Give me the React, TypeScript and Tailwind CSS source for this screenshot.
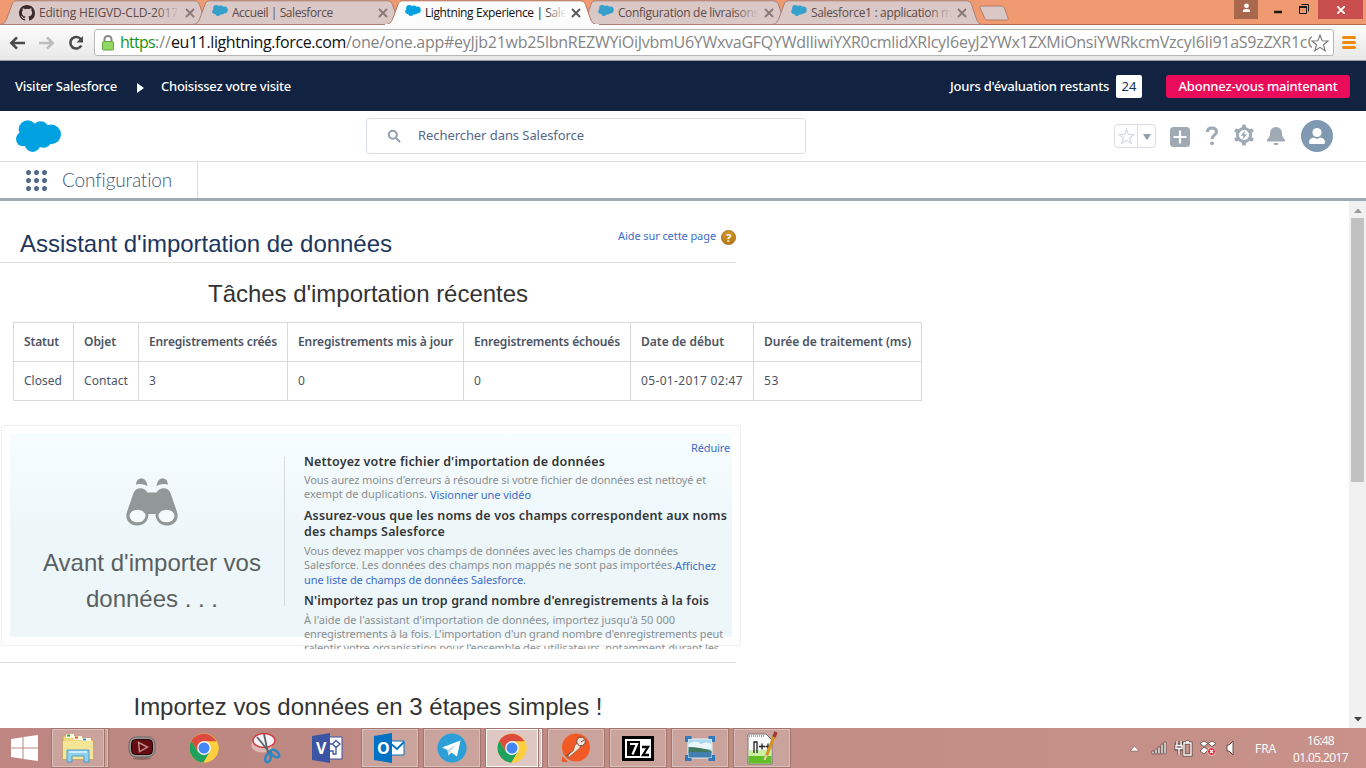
import { useLayoutEffect, useRef, useState } from "react";
import type { ReactNode } from "react";

type FitProps = { w: number; className?: string; children: string };

/* Single line of text tracked so that it fills a given width. */
function Fit({ w, className = "", children }: FitProps) {
  const ref = useRef<HTMLSpanElement>(null);
  const [spacing, setSpacing] = useState(0);
  useLayoutEffect(() => {
    if (!ref.current) return;
    const natural = ref.current.getBoundingClientRect().width;
    setSpacing((w - natural) / children.length);
  }, [w, children]);
  return (
    <span ref={ref} className={`inline-block shrink-0 whitespace-nowrap ${className}`} style={{ letterSpacing: `${spacing}px` }}>
      {children}
    </span>
  );
}

function Cloud({ className, fill = "#00a1e0" }: { className: string; fill?: string }) {
  return (
    <svg viewBox="0 0 45 32" className={className} fill={fill}>
      <circle cx="11.7" cy="9.3" r="9" />
      <circle cx="24.6" cy="9.3" r="8.1" />
      <circle cx="35.2" cy="14.4" r="9.8" />
      <circle cx="27.5" cy="19.8" r="7.9" />
      <circle cx="16.6" cy="24" r="7.9" />
      <circle cx="7.3" cy="19" r="7.3" />
      <path d="M8 9h26v12H8z" />
    </svg>
  );
}

function GitHub() {
  return (
    <svg viewBox="0 0 16 16" className="h-4 w-4" fill="#3b2b2b">
      <path d="M8 0C3.58 0 0 3.58 0 8c0 3.54 2.29 6.53 5.47 7.59.4.07.55-.17.55-.38 0-.19-.01-.82-.01-1.49-2.01.37-2.53-.49-2.69-.94-.09-.23-.48-.94-.82-1.13-.28-.15-.68-.52-.01-.53.63-.01 1.08.58 1.23.82.72 1.21 1.87.87 2.33.66.07-.52.28-.87.51-1.07-1.78-.2-3.64-.89-3.64-3.95 0-.87.31-1.59.82-2.15-.08-.2-.36-1.02.08-2.12 0 0 .67-.21 2.2.82a7.6 7.6 0 0 1 4 0c1.53-1.04 2.2-.82 2.2-.82.44 1.1.16 1.92.08 2.12.51.56.82 1.27.82 2.15 0 3.07-1.87 3.75-3.65 3.95.29.25.54.73.54 1.48 0 1.07-.01 1.93-.01 2.2 0 .21.15.46.55.38A8 8 0 0 0 16 8c0-4.42-3.58-8-8-8z" />
    </svg>
  );
}

function Tab({ title, w, active, github, fade = true }: { title: string; w: number; active?: boolean; github?: boolean; fade?: boolean }) {
  return (
    <div className={`relative flex h-[25px] w-[193px] shrink-0 items-start ${active ? "z-10" : ""}`}>
      <svg viewBox="0 0 214 25" className="absolute top-0 -left-[2px] h-[25px] w-[214px]">
        <path
          d="M0 24.5C5 24.5 6.500 22 8 18L13 4.500C14 1.500 15.500 .8 18 .8H195C198 .8 199.500 2 200.500 4.500L205.500 19C207 23 208.500 24.500 213 24.500Z"
          fill={active ? "#fcfcfc" : "#d9c8c6"}
          stroke={active ? "#b2765f" : "#a97f74"}
          strokeWidth="1"
        />
        {active && <path d="M0 25h214" stroke="#fcfcfc" strokeWidth="2" />}
      </svg>
      <div className="relative flex h-[25px] w-full items-start pl-[18px]">
        <div className="mt-[5px] w-[20px]">{github ? <GitHub /> : <Cloud className="h-[11px] w-[16px]" fill={active ? "#00a1e0" : "#35a0cc"} />}</div>
        <div className="relative flex h-[25px] w-[142px] items-start overflow-hidden pt-[4px]">
          <Fit w={w} className={`text-[12px] leading-[18px] ${active ? "text-[#111]" : "text-[#5d4b49]"}`}>{title}</Fit>
          {fade && <div className={`absolute top-[2px] right-0 h-[20px] w-[24px] bg-linear-to-r ${active ? "from-[#fcfcfc00] to-[#fcfcfc]" : "from-[#d9c8c600] to-[#d9c8c6]"}`} />}
        </div>
        <svg viewBox="0 0 8 8" className="mt-[9px] ml-[6px] h-2 w-2 overflow-visible" stroke={active ? "#555" : "#8a7775"} strokeWidth="1.8">
          <path d="M0 0 8 8M8 0 0 8" />
        </svg>
      </div>
    </div>
  );
}

function Browser() {
  return (
    <div className="h-[61px] border-b border-[#9c9c9c] bg-[#f09a71] font-['Open_Sans',sans-serif]">
      <div className="relative flex h-[25px] border-b border-[#b06d52] pl-px">
        <Tab title="Editing HEIGVD-CLD-2017" w={139} github />
        <Tab title="Accueil | Salesforce" w={101} fade={false} />
        <Tab title="Lightning Experience | Sale" w={142} active />
        <Tab title="Configuration de livraisons" w={141} />
        <Tab title="Salesforce1 : application m" w={141} />
        <svg viewBox="0 0 30 16" className="mt-[5px] ml-[13px] h-4 w-[30px]">
          <path d="M2 1H22C24 1 25 2 25.500 3.500L29 13C29.500 14.500 29 15 27.500 15H9C7 15 6 14 5.500 12.500L1 3C.5 1.500 1 1 2 1Z" fill="#d9c8c6" stroke="#b07d6c" />
        </svg>
        <div className="absolute top-0 right-0 flex h-[19px] pr-[3px]">
          <div className="flex w-[24px] justify-center bg-[#a9684c]">
            <svg viewBox="0 0 10 10" className="mt-[3px] h-[10px] w-[9px]" fill="#fff"><circle cx="5" cy="2.600" r="2.600" /><path d="M1 9.500V8Q1 6 5 6T9 8V9.500Z" /></svg>
          </div>
          <svg viewBox="0 0 60 19" className="h-[19px] w-[60px]" fill="none" stroke="#1d1715">
            <path d="M16 12h8" strokeWidth="2.500" /><path d="M41.500 6.500h7v7h-7z" /><path d="M41 7h8" strokeWidth="2" /><path d="M43.500 4.500h7v7" />
          </svg>
          <div className="flex w-[45px] justify-center bg-[#c94f4f]">
            <svg viewBox="0 0 8 8" className="mt-[6px] h-2 w-2" stroke="#fff" strokeWidth="1.8"><path d="M0 0 8 8M8 0 0 8" /></svg>
          </div>
        </div>
      </div>
      <div className="flex h-[35px] items-center bg-linear-to-b from-[#fcfcfc] to-[#e8e8e8] pl-[9px]">
        <svg viewBox="0 0 80 20" className="h-5 w-20" fill="none" stroke="#4b4b4b" strokeWidth="2.600">
          <path d="M2 10h14M8 4.300 2.300 10 8 15.700" />
          <path d="M44 10H30M38 4.300 43.700 10 38 15.700" stroke="#bdbdbd" />
          <path d="M72 6.500A5.800 5.800 0 1 0 72.300 12.500" /><path d="M74 3v6.500h-6.500z" fill="#4b4b4b" stroke="none" />
        </svg>
        <div className="ml-[5px] flex h-[27px] w-[1240px] items-center rounded-[3px] border border-[#b6b6b6] bg-white pl-[7px]">
          <svg viewBox="0 0 12 16" className="mr-[6px] h-4 w-3">
            <path d="M2.500 7V4.500Q2.500 1 6 1T9.500 4.500V7" fill="none" stroke="#8a8a8a" strokeWidth="2" /><rect x=".5" y="6.500" width="11" height="8.500" rx="1" fill="#91d863" stroke="#61a33d" />
          </svg>
          <div className="mb-[2px] flex w-[1192px] overflow-hidden text-[16px] leading-[22px] text-[#858585]">
            <Fit w={35} className="text-[#159415]">https</Fit>
            <Fit w={16}>://</Fit>
            <Fit w={175} className="text-[#111]">eu11.lightning.force.com</Fit>
            <Fit w={971}>/one/one.app#eyJjb21wb25lbnREZWYiOiJvbmU6YWxvaGFQYWdlIiwiYXR0cmlidXRlcyI6eyJ2YWx1ZXMiOnsiYWRkcmVzcyI6Ii91aS9zZXR1cC</Fit>
          </div>
          <svg viewBox="0 0 18 18" className="-ml-px h-[18px] w-[18px] shrink-0" fill="#fff" stroke="#777" strokeWidth="1.100"><path d="M9 1l2.200 5.700 6 .3-4.700 3.800 1.700 6L9 13.400 3.800 16.800l1.700-6L.8 7l6-.3z" /></svg>
        </div>
        <div className="ml-2 flex flex-col gap-[2px]">
          <div className="h-[3px] w-[14px] rounded-full bg-[#ee8a0c]" /><div className="h-[3px] w-[14px] rounded-full bg-[#ee8a0c]" /><div className="h-[3px] w-[14px] rounded-full bg-[#ee8a0c]" />
        </div>
      </div>
    </div>
  );
}

function TrialBar() {
  return (
    <div className="flex h-[50px] items-center bg-[#112340] pr-4 pl-[15px] text-[13px] font-medium text-white">
      <Fit w={102} className="mt-[2px]">Visiter Salesforce</Fit>
      <svg viewBox="0 0 7 10" className="mt-[3px] mr-[17px] ml-[20px] h-[10px] w-[7px]" fill="#fff"><path d="M0 0 7 5 0 10z" /></svg>
      <Fit w={130} className="mt-[2px]">Choisissez votre visite</Fit>
      <div className="ml-auto flex items-center">
        <Fit w={159} className="mt-[2px]">Jours d'évaluation restants</Fit>
        <div className="ml-[7px] flex h-[23px] w-[26px] items-center justify-center rounded-[2px] bg-white pt-px font-normal text-[#16325c]"><Fit w={15}>24</Fit></div>
        <div className="ml-[24px] flex h-[23px] w-[184px] items-center justify-center rounded-[3px] bg-[#ea0b5b] pt-px"><Fit w={159}>Abonnez-vous maintenant</Fit></div>
      </div>
    </div>
  );
}

function Header() {
  return (
    <header className="flex h-[51px] items-start border-b border-[#d8dde6] bg-white pl-[16px]">
      <Cloud className="mt-[9px] h-8 w-[45px]" />
      <div className="mt-[7px] ml-[305px] flex h-[36px] w-[440px] items-center rounded-[4px] border border-[#d8dde6] pl-[20px]">
        <svg viewBox="0 0 14 14" className="mr-[17px] h-[14px] w-[14px]" fill="none" stroke="#919eab" strokeWidth="2"><circle cx="5.800" cy="5.800" r="4" /><path d="m9 9 4 4" /></svg>
        <Fit w={166} className="text-[13px] text-[#54698d]">Rechercher dans Salesforce</Fit>
      </div>
      <div className="mt-[13px] ml-[308px] flex h-6 w-[42px] rounded-[4px] border border-[#d8dde6]">
        <div className="flex w-[23px] items-center justify-center border-r border-[#d8dde6]">
          <svg viewBox="0 0 18 18" className="h-[17px] w-[17px]" fill="none" stroke="#d5dae4" strokeWidth="1.300"><path d="M9 1.500l2 5.300 5.800.2-4.500 3.600 1.600 5.700L9 13l-4.900 3.300 1.600-5.700L1.200 7 7 6.800z" /></svg>
        </div>
        <div className="flex flex-1 items-center justify-center"><svg viewBox="0 0 8 6" className="mt-px h-[6px] w-2" fill="#919eab"><path d="M0 0h8L4.600 5.500h-1.200z" /></svg></div>
      </div>
      <svg viewBox="0 0 20 20" className="mt-[16px] ml-[14px] h-5 w-5"><rect width="20" height="20" rx="3.500" fill="#9faab5" /><path d="M10 3.500v13M3.500 10h13" stroke="#fff" strokeWidth="2.200" /></svg>
      <svg viewBox="0 0 14 20" className="mt-[15px] ml-[15px] h-5 w-[14px]" fill="none" stroke="#9faab5" strokeWidth="3"><path d="M2.300 6Q2.500 2 7 2T11.500 6C11.500 9 7 9 7 13" /><circle cx="7" cy="17.300" r="1.900" fill="#9faab5" stroke="none" /></svg>
      <svg viewBox="0 0 22 22" className="mt-[13px] ml-[14px] h-[22px] w-[22px]">
        <g fill="#9faab5"><circle cx="11" cy="11" r="8" /><rect x="9" y=".5" width="4" height="21" rx="1.500" /><rect x="9" y=".5" width="4" height="21" rx="1.500" transform="rotate(60 11 11)" /><rect x="9" y=".5" width="4" height="21" rx="1.500" transform="rotate(120 11 11)" /></g>
        <circle cx="11" cy="11" r="5.100" fill="#fff" /><path d="M11.800 6.600 7.700 11.700h2.700L9.700 15.400l4.500-5.200h-2.800z" fill="#9faab5" />
      </svg>
      <svg viewBox="0 0 20 20" className="mt-[15px] ml-[11px] h-5 w-5" fill="#9faab5"><path d="M10 1C6 1 4 4 4 7.500 4 12 1 12.500 1 14.500V15.500H19V14.500C19 12.500 16 12 16 7.500 16 4 14 1 10 1ZM7.500 17h5a2.500 2.200 0 0 1-5 0Z" /></svg>
      <svg viewBox="0 0 32 32" className="mt-[9px] ml-[15px] h-8 w-8"><circle cx="16" cy="16" r="16" fill="#7f99b2" /><circle cx="16" cy="12.500" r="4.600" fill="#fff" /><path d="M8 22.500Q8 18 13 17.500Q16 20 19 17.500Q24 18 24 22.500 24 24 22.500 24H9.500Q8 24 8 22.500Z" fill="#fff" /></svg>
    </header>
  );
}

function SetupNav() {
  return (
    <nav className="flex h-[39px] border-b-[3px] border-[#9faab5] bg-white">
      <div className="flex w-[198px] items-center border-r border-[#d8dde6] pl-[26px]">
        <div className="grid grid-cols-3 gap-[3px]">
          {Array.from({ length: 9 }, (_, i) => <span key={i} className="h-[5px] w-[5px] rounded-full bg-[#54698d]" />)}
        </div>
        <Fit w={110} className="ml-[15px] font-['Lato',sans-serif] text-[19px] font-light text-[#44587c]">Configuration</Fit>
      </div>
    </nav>
  );
}

const columns: { head: string; w: number; cell: string; cw: number; cls: string }[] = [
  { head: "Statut", w: 35, cell: "Closed", cw: 38, cls: "w-[60px]" },
  { head: "Objet", w: 32, cell: "Contact", cw: 44, cls: "w-[65px]" },
  { head: "Enregistrements créés", w: 128, cell: "3", cw: 7, cls: "w-[149px]" },
  { head: "Enregistrements mis à jour", w: 155, cell: "0", cw: 7, cls: "w-[176px]" },
  { head: "Enregistrements échoués", w: 146, cell: "0", cw: 7, cls: "w-[167px]" },
  { head: "Date de début", w: 83, cell: "05-01-2017 02:47", cw: 102, cls: "w-[123px]" },
  { head: "Durée de traitement (ms)", w: 147, cell: "53", cw: 15, cls: "w-[168px]" },
];

function Jobs() {
  return (
    <div className="mt-[14px] ml-[13px] flex h-[79px] w-[909px] border-t border-l border-[#d9d9d9] text-[12px] text-[#4c5464]">
      {columns.map((c) => (
        <div key={c.head} className={`shrink-0 border-r border-[#d9d9d9] ${c.cls}`}>
          <div className="flex h-[39px] items-center border-b border-[#d9d9d9] pl-[10px] font-semibold"><Fit w={c.w}>{c.head}</Fit></div>
          <div className="flex h-[39px] items-center border-b border-[#d9d9d9] pl-[10px]"><Fit w={c.cw}>{c.cell}</Fit></div>
        </div>
      ))}
    </div>
  );
}

function Head({ w, children }: { w: number; children: string }) {
  return <div className="flex h-4 shrink-0 text-[12.500px] leading-4 font-semibold text-[#333638]"><Fit w={w}>{children}</Fit></div>;
}
function Line({ children }: { children: ReactNode }) {
  return <div className="flex h-[14px] shrink-0 text-[11px] leading-[14px] text-[#8b8f91]">{children}</div>;
}

function Panel() {
  return (
    <div className="mt-[24px] ml-px h-[221px] w-[740px] rounded-[3px] border border-[#eee] p-[8px]">
      <div className="flex h-[203px] w-[722px] bg-linear-to-b from-[#f6fdff] to-[#edf6f9] to-50%">
        <div className="mt-[23px] flex h-[149px] w-[275px] shrink-0 flex-col items-center border-r border-[#d5dbdd] pl-[9px]">
          <svg viewBox="0 0 52 48" className="mt-[21px] h-12 w-[52px] shrink-0" fill="#929797">
            <path d="M10 6.500C10.500 2 12.500 .5 15.500 .5S20.500 2.500 21.500 8Q16 5 10 6.500ZM42 6.500C41.500 2 39.500 .5 36.500 .5S31.500 2.500 30.500 8Q36 5 42 6.500Z" />
            <path d="M7.500 15C9.500 9 18 8.500 21.500 14.500H30.500C34 8.500 42.500 9 44.500 15L51 34C53.500 41 48.500 47.500 41 47.500S29.500 42 29.500 36H22.500C22.500 42 19 47.500 11 47.500S-1.500 41 1 34Z" />
            <ellipse cx="11.500" cy="38" rx="8" ry="6.300" fill="#f4fbfd" /><ellipse cx="40.500" cy="38" rx="8" ry="6.300" fill="#f4fbfd" />
          </svg>
          <div className="mt-[19px] flex flex-col items-center pl-px font-['Liberation_Sans',sans-serif] text-[24px] leading-[36px] text-[#5b5f61]">
            <Fit w={218}>Avant d'importer vos</Fit><Fit w={132}>données . . .</Fit>
          </div>
        </div>
        <div className="flex h-[215px] w-[447px] flex-col overflow-hidden pl-[19px]">
          <div className="flex h-[20px] shrink-0 items-end justify-end pr-[2px] text-[11px] leading-[12px] text-[#3d6cc8]"><Fit w={39}>Réduire</Fit></div>
          <Head w={301}>Nettoyez votre fichier d'importation de données</Head>
          <div className="mt-[3px] mb-[7px]">
            <Line><Fit w={402}>Vous aurez moins d'erreurs à résoudre si votre fichier de données est nettoyé et</Fit></Line>
            <Line><Fit w={123}>exempt de duplications.</Fit><Fit w={101} className="mt-px ml-[3px] text-[#3d6cc8]">Visionner une vidéo</Fit></Line>
          </div>
          <Head w={423}>Assurez-vous que les noms de vos champs correspondent aux noms</Head>
          <Head w={141}>des champs Salesforce</Head>
          <div className="mt-1 mb-[7px]">
            <Line><Fit w={374}>Vous devez mapper vos champs de données avec les champs de données</Fit></Line>
            <Line><Fit w={371}>Salesforce. Les données des champs non mappés ne sont pas importées.</Fit><Fit w={41} className="mt-px text-[#3d6cc8]">Affichez</Fit></Line>
            <Line><Fit w={222} className="mt-px text-[#3d6cc8]">une liste de champs de données Salesforce.</Fit></Line>
          </div>
          <Head w={405}>N'importez pas un trop grand nombre d'enregistrements à la fois</Head>
          <div className="mt-[4px] flex flex-col">
            <Line><Fit w={371}>À l'aide de l'assistant d'importation de données, importez jusqu'à 50 000</Fit></Line>
            <Line><Fit w={419}>enregistrements à la fois. L'importation d'un grand nombre d'enregistrements peut</Fit></Line>
            <Line><Fit w={415}>ralentir votre organisation pour l'ensemble des utilisateurs, notamment durant les</Fit></Line>
          </div>
        </div>
      </div>
    </div>
  );
}

function Content() {
  return (
    <main className="flex h-[527px] overflow-hidden bg-white">
      <div className="w-[1349px] shrink-0">
        <div className="flex h-[62px] w-[736px] justify-between border-b border-[#ddd] pl-[20px]">
          <Fit w={372} className="mt-[25px] font-['Liberation_Sans',sans-serif] text-[24px] leading-[36px] text-[#1c3660]">Assistant d'importation de données</Fit>
          <div className="mt-[27px] flex h-[17px] text-[11px] leading-[15px] text-[#3d6cc8]">
            <Fit w={98}>Aide sur cette page</Fit>
            <span className="mt-[2px] ml-[5px] flex h-[15px] w-[15px] items-center justify-center rounded-full border border-[#9c6c14] bg-linear-to-b from-[#d7962a] to-[#b57a18] text-[11px] font-bold text-white">?</span>
          </div>
        </div>
        <div className="mt-[9px] flex h-[36px] w-[736px] items-center justify-center font-['Liberation_Sans',sans-serif] text-[24px] leading-[44px] text-[#333]"><Fit w={320} className="mt-[7px]">Tâches d'importation récentes</Fit></div>
        <Jobs />
        <Panel />
        <div className="mt-[16px] w-[736px] border-b border-[#ddd]" />
        <div className="mt-[26px] flex w-[736px] justify-center font-['Liberation_Sans',sans-serif] text-[24px] leading-[36px] text-[#333]"><Fit w={469}>Importez vos données en 3 étapes simples !</Fit></div>
      </div>
      <div className="flex w-[17px] flex-col items-center justify-between bg-[#f1f1f1]">
        <div className="flex flex-col items-center">
          <svg viewBox="0 0 8 5" className="mt-[7px] mb-[5px] h-[5px] w-2" fill="#9a9a9a"><path d="M0 5h8L4 .5z" /></svg>
          <div className="h-[264px] w-[13px] bg-[#c1c1c1]" />
        </div>
        <svg viewBox="0 0 8 5" className="mb-[6px] h-[5px] w-2" fill="#444"><path d="M0 0h8L4 4.500z" /></svg>
      </div>
    </main>
  );
}

function Chrome() {
  return (
    <svg viewBox="0 0 30 30" className="h-[30px] w-[30px]">
      <circle cx="15" cy="15" r="14.600" fill="#fdcf3e" />
      <path d="M2.400 7.700A14.600 14.600 0 0 0 14.500 29.600L21.200 18.500 15 15 8.800 18.500Z" fill="#1fa15d" />
      <path d="M15 8.200H27.800A14.600 14.600 0 0 1 14.500 29.600L21 18.500Z" fill="#fdcf3e" />
      <path d="M2.400 7.700 8.700 18.600 15 8.300H27.600A14.600 14.600 0 0 0 2.400 7.700Z" fill="#dc4b3e" />
      <circle cx="15" cy="15" r="6.900" fill="#f5f3ee" /><circle cx="15" cy="15" r="5.500" fill="#4285f4" />
    </svg>
  );
}

function Slot({ kind, stacked, children }: { kind: "idle" | "open" | "active"; stacked?: boolean; children: ReactNode }) {
  const look = kind === "open" ? "border-[#d9bfbb] bg-[#cba39d] shadow-[0_0_0_1px_#a2756f]" : kind === "active" ? "border-white bg-[#dfc8c4] shadow-[0_0_0_1px_#a2756f]" : "border-transparent";
  return (
    <div className="flex h-10 w-[62px] shrink-0 pr-[4px] pl-[2px] py-px">
      <div className={`flex flex-1 items-center justify-center border ${look}`}>{children}</div>
      {stacked && <div className={`ml-px w-[3px] border-y border-r ${look}`} />}
    </div>
  );
}

function Taskbar() {
  return (
    <footer className="flex h-10 bg-linear-to-r from-[#bd8681] via-[#c08c84] to-[#c8928a] font-['Open_Sans',sans-serif]">
      <div className="flex w-[50px] shrink-0 items-center pl-[11px]">
        <svg viewBox="0 0 27 26" className="h-[26px] w-[27px]" fill="#fff"><path d="M0 4 11.500 2.300V12.400H0ZM12.500 2.100 27 0V12.400H12.500ZM0 13.400H11.500V23.700L0 22ZM12.500 13.400H27V26L12.500 23.900Z" /></svg>
      </div>
      <Slot kind="open" stacked>
        <svg viewBox="0 0 32 30" className="h-[30px] w-8">
          <path d="M1 3h13l1 2h5l1 2h10v19H1z" fill="#efd77b" stroke="#c9a94b" /><path d="M4 1h8v4H4zM12 3h8v4h-8zM20 5h9v4h-9z" fill="#fff8df" /><path d="M5 1.500h3v2H5z" fill="#22b14c" /><path d="M13 3.500h3v2h-3z" fill="#df5733" /><path d="M21 5.500h3v2h-3z" fill="#3490dc" />
          <path d="M1 8h30v18H1z" fill="#f5e597" /><path d="M5 17h22v12h-5v-6H10v6H5z" fill="#8ed0ed" stroke="#4e9dc7" /><path d="M7 19h18" stroke="#dff5ff" strokeWidth="1.500" />
        </svg>
      </Slot>
      <Slot kind="idle">
        <svg viewBox="0 0 28 26" className="h-[26px] w-7"><ellipse cx="14" cy="23.500" rx="9" ry="1.500" fill="#916560" /><rect x="1" y="2" width="26" height="20" rx="7" fill="#999" stroke="#666" /><rect x="3.500" y="4.500" width="21" height="15" rx="4" fill="#650c13" stroke="#2d0306" /><path d="m10.500 7.500 9 4.500-8 4.500z" fill="none" stroke="#c58b8b" strokeWidth="1.400" /></svg>
      </Slot>
      <Slot kind="idle"><Chrome /></Slot>
      <Slot kind="idle">
        <svg viewBox="0 0 32 32" className="h-8 w-8"><ellipse cx="12" cy="13" rx="11" ry="8" fill="#dbb9b5" stroke="#c98c8b" /><ellipse cx="14" cy="8.500" rx="11" ry="7" fill="#f3f3f5" stroke="#d43c40" strokeWidth="1.500" /><path d="M7 5 20 21M14 2 18 21" stroke="#5f6368" strokeWidth="1.800" /><ellipse cx="18" cy="26" rx="2.600" ry="4.300" fill="none" stroke="#2b87c5" strokeWidth="2.500" transform="rotate(15 18 26)" /><ellipse cx="25" cy="21.500" rx="2.800" ry="5" fill="none" stroke="#2b87c5" strokeWidth="2.500" transform="rotate(-50 25 21.500)" /></svg>
      </Slot>
      <Slot kind="idle">
        <svg viewBox="0 0 32 30" className="h-[30px] w-8"><path d="M16 4h14v22H16z" fill="#fff" stroke="#3955a3" /><path d="M24 7.500 28 11l-4 3.500L20.500 11zM20.500 11H18M24 14.500V21h-3v-3h-3" fill="none" stroke="#3955a3" strokeWidth="1.300" /><path d="M0 3 18 0V30L0 27Z" fill="#3955a3" /><text x="4" y="21" fontSize="16" fontWeight="700" fill="#fff">V</text></svg>
      </Slot>
      <Slot kind="open">
        <svg viewBox="0 0 32 30" className="h-[30px] w-8"><path d="M16 8h14v14H16z" fill="#fff" stroke="#0072c6" /><path d="m16 10 7 6 7-7" fill="none" stroke="#0072c6" strokeWidth="1.800" /><path d="M0 3 18 0V30L0 27Z" fill="#0072c6" /><text x="3" y="21" fontSize="16" fontWeight="700" fill="#fff">O</text></svg>
      </Slot>
      <Slot kind="open">
        <svg viewBox="0 0 30 30" className="h-[30px] w-[30px]"><circle cx="15" cy="15" r="14.600" fill="#2c9fd8" /><path d="M5 14.500 23.500 7.500 20 23.500 14.500 19.500 11.500 22.500 10.500 17Z" fill="#fff" /><path d="m10.500 17 9-6-6 7.500-2 4z" fill="#c6d9e6" /></svg>
      </Slot>
      <Slot kind="active" stacked><Chrome /></Slot>
      <Slot kind="open">
        <svg viewBox="0 0 30 30" className="h-[30px] w-[30px]"><circle cx="15" cy="14.500" r="14" fill="#f15a24" /><path d="M1 23v6h6z" fill="#f15a24" /><path d="M14 12c3-3 6-1 5 3l-6 5-6 5c0-4 2-5 5-7z" fill="#f6e1d4" stroke="#8d5b45" strokeWidth=".8" /><circle cx="20" cy="8.500" r="4.300" fill="#f6e1d4" stroke="#5f4b44" /><path d="m20 9 3-2M10 19l-5 4" stroke="#5f4b44" /></svg>
      </Slot>
      <Slot kind="open">
        <svg viewBox="0 0 32 25" className="h-[25px] w-8"><path d="M1.500 1.500h29v22h-29z" fill="#fff" stroke="#000" strokeWidth="3" /><path d="M5 5h13v15H5z" fill="#000" /><path d="M8 8h7L10.500 18.500" fill="none" stroke="#fff" strokeWidth="2.200" /><path d="M20 11h6l-5 8h6" fill="none" stroke="#000" strokeWidth="2.300" /></svg>
      </Slot>
      <Slot kind="open">
        <svg viewBox="0 0 30 27" className="h-[27px] w-[30px]"><path d="M3 4h24v19H3z" fill="#abd7f1" stroke="#e8f0f4" /><path d="M3.500 9q8-5 12 0 6-3 11 0v5h-23z" fill="#eaf6fb" /><path d="M3.500 12q12 0 23 4v2h-23z" fill="#42785e" /><path d="M3.500 17h23v5.500h-23z" fill="#407fae" /><path d="M1.500 7V2.500h5M23.500 2.500h5V7M28.500 20v4.500h-5M6.500 24.500h-5V20" fill="none" stroke="#3279bb" strokeWidth="3" /></svg>
      </Slot>
      <Slot kind="open">
        <svg viewBox="0 0 32 34" className="h-[34px] w-8"><path d="M2 3h18l6 6v24H2z" fill="#fafafa" stroke="#777" /><path d="M2.500 19h23v6h-23z" fill="#c9efa2" /><path d="M2.500 25h23v7.500h-23z" fill="#63bd29" /><path d="M3 5h16" stroke="#aaa" strokeDasharray="1 1" strokeWidth="2" /><path d="M8 22V11h3v11M13 15.500h6M16 12.500v6M19.500 15.500h5M22 12.500v6" fill="none" stroke="#222" strokeWidth="1.300" /><path d="M29 3 20 26" stroke="#d99321" strokeWidth="3.200" /><path d="m30 1-2 5" stroke="#a13935" strokeWidth="3.500" /><path d="m20.500 24-2 5" stroke="#e9d7b0" strokeWidth="2" /></svg>
      </Slot>
      <div className="ml-auto flex items-center text-white">
        <svg viewBox="0 0 108 18" className="mr-[17px] h-[18px] w-[108px]">
          <path d="m0 12 4.500-5L9 12z" fill="#fff" stroke="#826562" strokeWidth=".7" />
          <path d="M22 12h2v3h-2zM25 10h2v5h-2zM28 8h2v7h-2zM31 5h2v10h-2zM34 3h2v12h-2z" fill="#fff" stroke="#584643" strokeWidth=".7" />
          <path d="M47 2v4M51 2v4M46 6h6v4h-6zM49 10v6M54 4h7v12h-7zM56 3h3" stroke="#584643" strokeWidth="3" fill="none" /><path d="M47 2v4M51 2v4M46 6.500h6v3h-6zM49 10v6M54 4h7v12h-7zM56 3h3" stroke="#fff" strokeWidth="1.400" fill="none" />
          <path d="m74 2 4 2.500-4 3-4-3zM82 2l4 2.500-4 3-4-3zM74 8l4 3-4 4-4-3zM82 8l4 3-4 4-4-4z" fill="#fff" stroke="#584643" strokeWidth=".8" /><circle cx="81.500" cy="12.500" r="4" fill="#df2a31" stroke="#fff" strokeWidth=".7" /><path d="m80 11 3 3m0-3-3 3" stroke="#fff" strokeWidth="1.200" />
          <path d="M97 6h2l4-4v14l-4-4h-2z" fill="#fff" stroke="#584643" strokeWidth=".9" />
        </svg>
        <Fit w={21} className="mt-px text-[12px]">FRA</Fit>
        <div className="mr-[18px] ml-[17px] flex flex-col items-center pt-px text-[12px] leading-[17px]"><Fit w={27}>16:48</Fit><Fit w={55}>01.05.2017</Fit></div>
      </div>
    </footer>
  );
}

export default function App() {
  return (
    <div className="flex h-[768px] w-[1366px] flex-col overflow-hidden bg-white font-['Noto_Sans',sans-serif]">
      <Browser />
      <TrialBar />
      <Header />
      <SetupNav />
      <Content />
      <Taskbar />
    </div>
  );
}
